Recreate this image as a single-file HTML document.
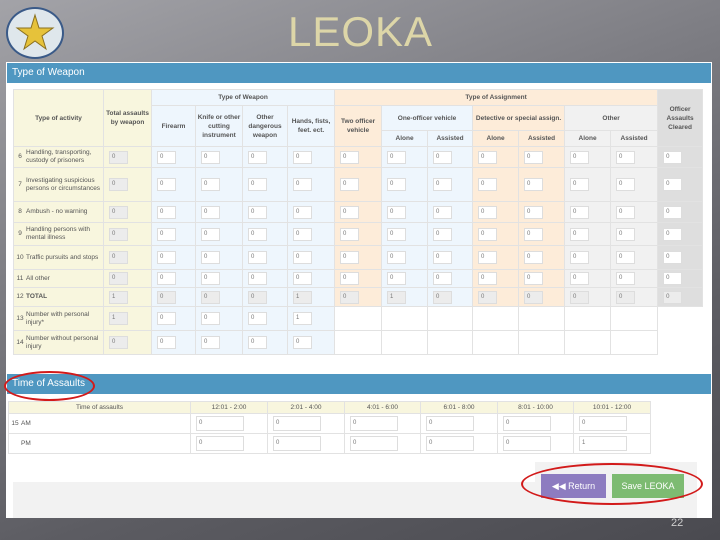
<!DOCTYPE html>
<html><head><meta charset="utf-8"><style>
*{margin:0;padding:0;box-sizing:border-box}
body{width:720px;height:540px;overflow:hidden;position:relative;font-family:"Liberation Sans",sans-serif;
background:linear-gradient(160deg,#a3a3a8 0%,#7e7e84 35%,#5c5c62 70%,#4a4a50 100%)}
.title{position:absolute;left:288px;top:8px;font-size:42px;color:#ddd6a8;letter-spacing:1px}
.logo{position:absolute;left:6px;top:7px;width:58px;height:52px;border-radius:50%;background:#dfe7ec;border:2px solid #3a5a88}
.panel{position:absolute;left:6px;top:62px;width:706px;height:456px;background:#fff}
.bar{position:absolute;left:1px;width:704px;height:20px;background:#4f97c1;color:#fff;font-size:10px;padding:4px 0 0 5px}
table{border-collapse:collapse;table-layout:fixed;position:absolute;font-size:6.5px;color:#555}
td{border:1px solid #e2e2e2;padding:0;vertical-align:middle}
.h td{font-weight:bold;text-align:center;color:#555;line-height:9px}
.y{background:#f8f6de}.b{background:#eef6fd}.o{background:#fdecd9}.g{background:#f1f1f1}.d{background:#dedede}.w{background:#fff}
i{display:block;width:19px;height:13px;background:#fff;border:1px solid #ddd;margin-left:5px;font-style:normal;font-size:6px;line-height:11px;padding-left:2px;color:#777}
i.x{background:#ececec}
.a{display:flex;align-items:center;line-height:8px}
.a b{font-weight:normal;width:12px;text-align:center;flex:none}
.t2 td{line-height:8px}
.t2 i{width:48px;height:15px;line-height:13px}
.btn{position:absolute;color:#fff;font-size:9px;text-align:center;line-height:24px;height:24px;top:474px}
.ell{position:absolute;border:2.5px solid #d21a1a;border-radius:50%}
</style></head><body>
<div class="logo"><svg width="54" height="48" viewBox="0 0 54 48"><polygon points="27,6 31,19 45,19 34,27 38,40 27,32 16,40 20,27 9,19 23,19" fill="#e6c23a" stroke="#8a7020" stroke-width="1"/></svg></div>
<div class="title">LEOKA</div>
<div class="panel">
<div class="bar" style="top:1px">Type of Weapon</div>
<table style="left:7px;top:27px;width:689px">
<colgroup><col style="width:90px"><col style="width:48px"><col style="width:44px"><col style="width:47px"><col style="width:45px"><col style="width:47px"><col style="width:47px"><col style="width:46px"><col style="width:45px"><col style="width:46px"><col style="width:46px"><col style="width:46px"><col style="width:47px"><col style="width:45px"></colgroup>
<tr class="h" style="height:16px"><td class="y" rowspan="3">Type of activity</td><td class="y" rowspan="3">Total assaults by weapon</td><td class="b" colspan="4">Type of Weapon</td><td class="o" colspan="7">Type of Assignment</td><td class="d" rowspan="3">Officer Assaults Cleared</td></tr>
<tr class="h" style="height:25px"><td class="b" rowspan="2">Firearm</td><td class="b" rowspan="2">Knife or other cutting instrument</td><td class="b" rowspan="2">Other dangerous weapon</td><td class="b" rowspan="2">Hands, fists, feet. ect.</td><td class="o" rowspan="2">Two officer vehicle</td><td class="b" colspan="2">One-officer vehicle</td><td class="o" colspan="2">Detective or special assign.</td><td class="g" colspan="2">Other</td></tr>
<tr class="h" style="height:16px"><td class="b">Alone</td><td class="b">Assisted</td><td class="o">Alone</td><td class="o">Assisted</td><td class="g">Alone</td><td class="g">Assisted</td></tr>
<tr style="height:21px"><td class="y"><div class="a"><b>6</b>Handling, transporting, custody of prisoners</div></td><td class="y"><i class="x">0</i></td><td class="b"><i>0</i></td><td class="b"><i>0</i></td><td class="b"><i>0</i></td><td class="b"><i>0</i></td><td class="o"><i>0</i></td><td class="b"><i>0</i></td><td class="b"><i>0</i></td><td class="o"><i>0</i></td><td class="o"><i>0</i></td><td class="g"><i>0</i></td><td class="g"><i>0</i></td><td class="d"><i>0</i></td></tr>
<tr style="height:34px"><td class="y"><div class="a"><b>7</b>Investigating suspicious persons or circumstances</div></td><td class="y"><i class="x">0</i></td><td class="b"><i>0</i></td><td class="b"><i>0</i></td><td class="b"><i>0</i></td><td class="b"><i>0</i></td><td class="o"><i>0</i></td><td class="b"><i>0</i></td><td class="b"><i>0</i></td><td class="o"><i>0</i></td><td class="o"><i>0</i></td><td class="g"><i>0</i></td><td class="g"><i>0</i></td><td class="d"><i>0</i></td></tr>
<tr style="height:21px"><td class="y"><div class="a"><b>8</b>Ambush - no warning</div></td><td class="y"><i class="x">0</i></td><td class="b"><i>0</i></td><td class="b"><i>0</i></td><td class="b"><i>0</i></td><td class="b"><i>0</i></td><td class="o"><i>0</i></td><td class="b"><i>0</i></td><td class="b"><i>0</i></td><td class="o"><i>0</i></td><td class="o"><i>0</i></td><td class="g"><i>0</i></td><td class="g"><i>0</i></td><td class="d"><i>0</i></td></tr>
<tr style="height:23px"><td class="y"><div class="a"><b>9</b>Handling persons with mental illness</div></td><td class="y"><i class="x">0</i></td><td class="b"><i>0</i></td><td class="b"><i>0</i></td><td class="b"><i>0</i></td><td class="b"><i>0</i></td><td class="o"><i>0</i></td><td class="b"><i>0</i></td><td class="b"><i>0</i></td><td class="o"><i>0</i></td><td class="o"><i>0</i></td><td class="g"><i>0</i></td><td class="g"><i>0</i></td><td class="d"><i>0</i></td></tr>
<tr style="height:24px"><td class="y"><div class="a"><b>10</b>Traffic pursuits and stops</div></td><td class="y"><i class="x">0</i></td><td class="b"><i>0</i></td><td class="b"><i>0</i></td><td class="b"><i>0</i></td><td class="b"><i>0</i></td><td class="o"><i>0</i></td><td class="b"><i>0</i></td><td class="b"><i>0</i></td><td class="o"><i>0</i></td><td class="o"><i>0</i></td><td class="g"><i>0</i></td><td class="g"><i>0</i></td><td class="d"><i>0</i></td></tr>
<tr style="height:18px"><td class="y"><div class="a"><b>11</b>All other</div></td><td class="y"><i class="x">0</i></td><td class="b"><i>0</i></td><td class="b"><i>0</i></td><td class="b"><i>0</i></td><td class="b"><i>0</i></td><td class="o"><i>0</i></td><td class="b"><i>0</i></td><td class="b"><i>0</i></td><td class="o"><i>0</i></td><td class="o"><i>0</i></td><td class="g"><i>0</i></td><td class="g"><i>0</i></td><td class="d"><i>0</i></td></tr>
<tr style="height:19px"><td class="y"><div class="a"><b>12</b><span style="font-weight:bold">TOTAL</span></div></td><td class="y"><i class="x">1</i></td><td class="b"><i class="x">0</i></td><td class="b"><i class="x">0</i></td><td class="b"><i class="x">0</i></td><td class="b"><i class="x">1</i></td><td class="o"><i class="x">0</i></td><td class="b"><i class="x">1</i></td><td class="b"><i class="x">0</i></td><td class="o"><i class="x">0</i></td><td class="o"><i class="x">0</i></td><td class="g"><i class="x">0</i></td><td class="g"><i class="x">0</i></td><td class="d"><i class="x">0</i></td></tr>
<tr style="height:24px"><td class="y"><div class="a"><b>13</b>Number with personal injury*</div></td><td class="y"><i class="x">1</i></td><td class="b"><i>0</i></td><td class="b"><i>0</i></td><td class="b"><i>0</i></td><td class="b"><i>1</i></td><td class="w"></td><td class="w"></td><td class="w"></td><td class="w"></td><td class="w"></td><td class="w"></td><td class="w"></td><td class="w" style="border:none"></td></tr>
<tr style="height:24px"><td class="y"><div class="a"><b>14</b>Number without personal injury</div></td><td class="y"><i class="x">0</i></td><td class="b"><i>0</i></td><td class="b"><i>0</i></td><td class="b"><i>0</i></td><td class="b"><i>0</i></td><td class="w"></td><td class="w"></td><td class="w"></td><td class="w"></td><td class="w"></td><td class="w"></td><td class="w"></td><td class="w" style="border:none"></td></tr>
</table>
<div class="bar" style="top:312px">Time of Assaults</div>
<table class="t2" style="left:2px;top:339px;width:642px">
<colgroup><col style="width:182px"><col style="width:77px"><col style="width:77px"><col style="width:76px"><col style="width:77px"><col style="width:76px"><col style="width:77px"></colgroup>
<tr style="height:12px" class="y"><td style="text-align:center">Time of assaults</td><td style="text-align:center">12:01 - 2:00</td><td style="text-align:center">2:01 - 4:00</td><td style="text-align:center">4:01 - 6:00</td><td style="text-align:center">6:01 - 8:00</td><td style="text-align:center">8:01 - 10:00</td><td style="text-align:center">10:01 - 12:00</td></tr>
<tr style="height:20px"><td><div class="a"><b>15</b>AM</div></td><td><i>0</i></td><td><i>0</i></td><td><i>0</i></td><td><i>0</i></td><td><i>0</i></td><td><i>0</i></td></tr>
<tr style="height:20px"><td><div class="a"><b></b>PM</div></td><td><i>0</i></td><td><i>0</i></td><td><i>0</i></td><td><i>0</i></td><td><i>0</i></td><td><i>1</i></td></tr>
</table>
<div style="position:absolute;left:529px;top:400px;width:162px;height:56px;background:#f2f2f2"></div>
<div style="position:absolute;left:7px;top:420px;width:684px;height:36px;background:#f2f2f2"></div>
</div>
<div class="btn" style="left:541px;width:65px;background:#8d7cc0">◀◀ Return</div>
<div class="btn" style="left:612px;width:72px;background:#7dbb72">Save LEOKA</div>
<div class="ell" style="left:4px;top:371px;width:91px;height:30px"></div>
<div class="ell" style="left:521px;top:463px;width:182px;height:42px"></div>
<div style="position:absolute;left:671px;top:517px;font-size:11px;color:#cfcfcf">22</div>
</body></html>
